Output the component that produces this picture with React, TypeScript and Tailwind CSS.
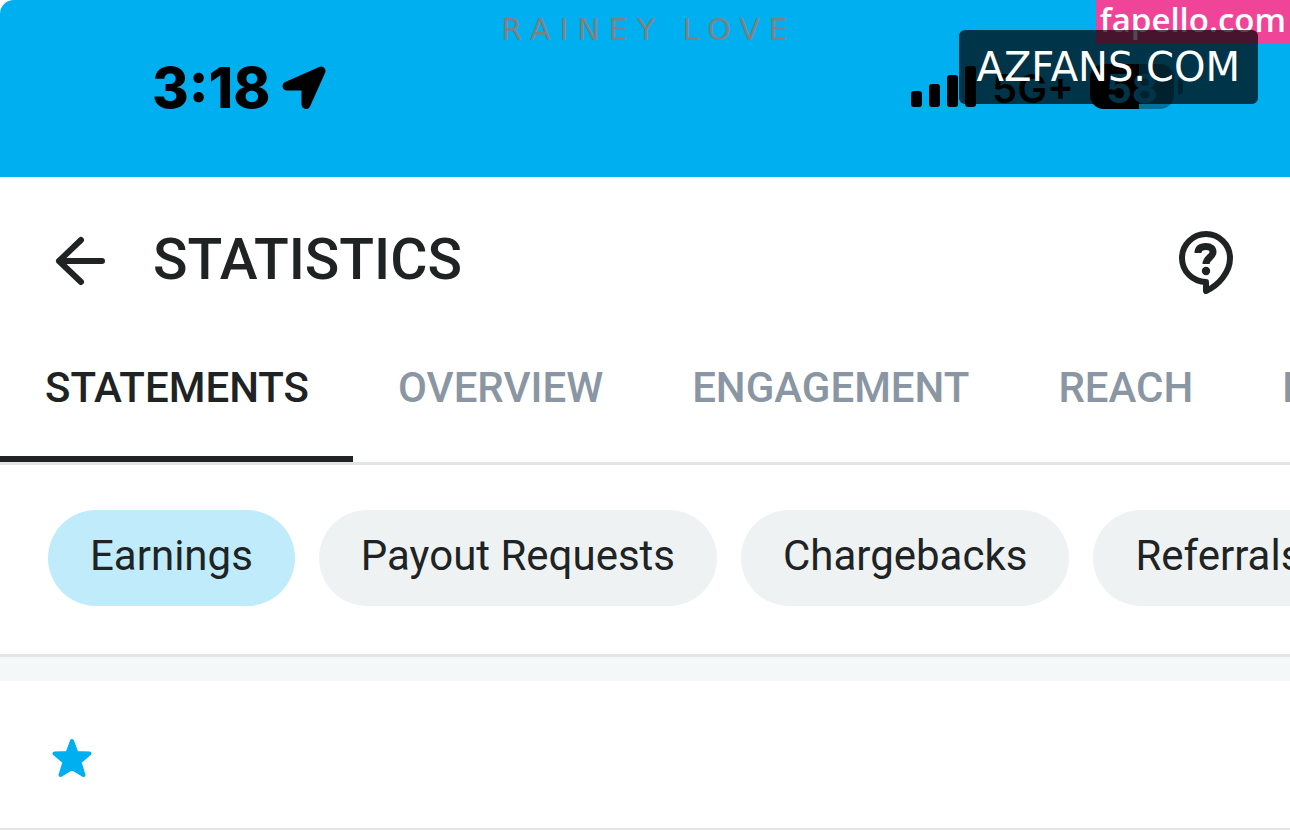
import { useState } from 'react';
import clsx from 'clsx';

const tabs = ['STATEMENTS', 'OVERVIEW', 'ENGAGEMENT', 'REACH', 'FANS'];
const filters = ['Earnings', 'Payout Requests', 'Chargebacks', 'Referrals'];

function LocationIcon() {
  return (
    <svg width="44" height="44" viewBox="0 0 44 44" aria-hidden="true">
      <path
        d="M39 5L24 38.500V20H5Z"
        fill="#000"
        stroke="#000"
        strokeWidth="9"
        strokeLinejoin="round"
      />
    </svg>
  );
}

function SignalIcon() {
  return (
    <svg width="65" height="41" viewBox="0 0 65 41" aria-hidden="true">
      <rect x="0" y="25" width="11" height="16" rx="3" />
      <rect x="18" y="18" width="11" height="23" rx="3" />
      <rect x="36" y="9" width="11" height="32" rx="3" />
      <rect x="54" y="0" width="11" height="41" rx="3" />
    </svg>
  );
}

function Battery({ level }: { level: number }) {
  return (
    <div className="flex items-center gap-1">
      <div className="relative flex h-[45px] w-[84px] items-center justify-center overflow-hidden rounded-[14px] bg-black/35">
        <div className="absolute inset-y-0 left-0 bg-black" style={{ width: `${level}%` }} />
        <span className="relative pt-1 text-[40px] leading-none font-bold text-[#00aff0]">{level}</span>
      </div>
      <div className="h-4 w-[5px] rounded-r-full bg-black/35" />
    </div>
  );
}

function BackIcon() {
  return (
    <svg width="50" height="50" viewBox="0 0 50 50" fill="none" stroke="currentColor" strokeWidth="6" strokeLinecap="round" strokeLinejoin="round" aria-hidden="true">
      <path d="M26 4L4 25L26 46M4 25H47" />
    </svg>
  );
}

function HelpIcon() {
  return (
    <svg width="54" height="63" viewBox="0 0 54 63" fill="none" stroke="currentColor" strokeWidth="6" strokeLinejoin="round" aria-hidden="true">
      <path d="M27 51A24 24 0 1 1 51 27C51 41 40 54 27 60V51Z" />
      <path d="M19 22C19 17.500 22 15.500 27 15.500C31.500 15.500 34 17.500 34 21C34 26 27 27 27 33" strokeWidth="7" />
      <circle cx="27" cy="40" r="4.200" fill="currentColor" stroke="none" />
    </svg>
  );
}

function StarIcon() {
  return (
    <svg width="40" height="40" viewBox="0 0 40 40" aria-hidden="true">
      <path
        d="M20 3L24.500 15L37.500 15.500L27.500 24L31.500 37L20 30L8.500 37L12.500 24L2.500 15.500L15.500 15Z"
        fill="#00aff0"
        stroke="#00aff0"
        strokeWidth="4"
        strokeLinejoin="round"
      />
    </svg>
  );
}

function StatusBar() {
  return (
    <div className="relative flex h-[177px] items-start justify-between rounded-tl-[14px] bg-[#00aff0] pt-16 pr-[107px] pl-[152px] font-['Inter',sans-serif] text-black">
      <div className="flex h-12 items-center gap-3">
        <span className="text-[56px] leading-none font-extrabold">3:18</span>
        <LocationIcon />
      </div>
      <div className="flex h-[45px] items-center gap-4">
        <SignalIcon />
        <span className="pt-1 text-[40px] leading-none font-semibold">5G+</span>
        <Battery level={58} />
      </div>

      {/* labels stamped over the bar */}
      <span className="absolute inset-x-0 top-3 pl-2 text-center font-['DejaVu_Sans',sans-serif] text-[30px] leading-9 tracking-[9px] text-[#80807e]">
        RAINEY LOVE
      </span>
      <span className="absolute top-0 right-0 h-11 bg-[#ef4497] px-1 font-['Open_Sans',sans-serif] text-[33px] leading-10 font-semibold text-white">
        fapello.com
      </span>
      <span className="absolute top-[30px] right-8 flex h-[74px] items-center rounded-md bg-black/70 px-[18px] font-['DejaVu_Sans',sans-serif] text-[40px] leading-none text-white">
        AZFANS.COM
      </span>
    </div>
  );
}

function App() {
  const [tab, setTab] = useState('STATEMENTS');
  const [filter, setFilter] = useState('Earnings');

  return (
    <div className="w-full overflow-hidden bg-white font-['Roboto',sans-serif] text-[#202324]">
      <StatusBar />

      <header className="flex h-[168px] items-center justify-between pr-[57px] pl-[55px]">
        <div className="flex items-center gap-12">
          <button type="button" aria-label="Back">
            <BackIcon />
          </button>
          <h1 className="pb-1 text-[57px] leading-none font-medium">STATISTICS</h1>
        </div>
        <button type="button" aria-label="Help" className="pt-0.5">
          <HelpIcon />
        </button>
      </header>

      <nav className="flex border-b-[3px] border-[#e2e4e5]">
        {tabs.map((name) => (
          <button
            key={name}
            type="button"
            onClick={() => setTab(name)}
            className={clsx(
              'shrink-0 border-b-6 pt-[18px] pr-11 pb-[43px] pl-[45px] text-[42px] leading-[50px] font-medium',
              tab === name ? 'border-[#202324]' : 'border-transparent text-[#8a96a3]'
            )}
          >
            {name}
          </button>
        ))}
      </nav>

      <div className="flex gap-6 border-b-[3px] border-[#e2e4e5] pt-[45px] pb-12 pl-12">
        {filters.map((name) => (
          <button
            key={name}
            type="button"
            onClick={() => setFilter(name)}
            className={clsx(
              'h-24 shrink-0 rounded-full px-[42px] pb-1 text-[42px] leading-none',
              filter === name ? 'bg-[#bfebfb]' : 'bg-[#eef2f3]'
            )}
          >
            {name}
          </button>
        ))}
      </div>

      <div className="h-6 bg-[#f4f8f8]" />

      <main className="flex h-[150px] items-center border-b-[3px] border-[#e2e4e5] px-[52px] pt-1.5">
        <StarIcon />
      </main>
    </div>
  );
}

export default App;
